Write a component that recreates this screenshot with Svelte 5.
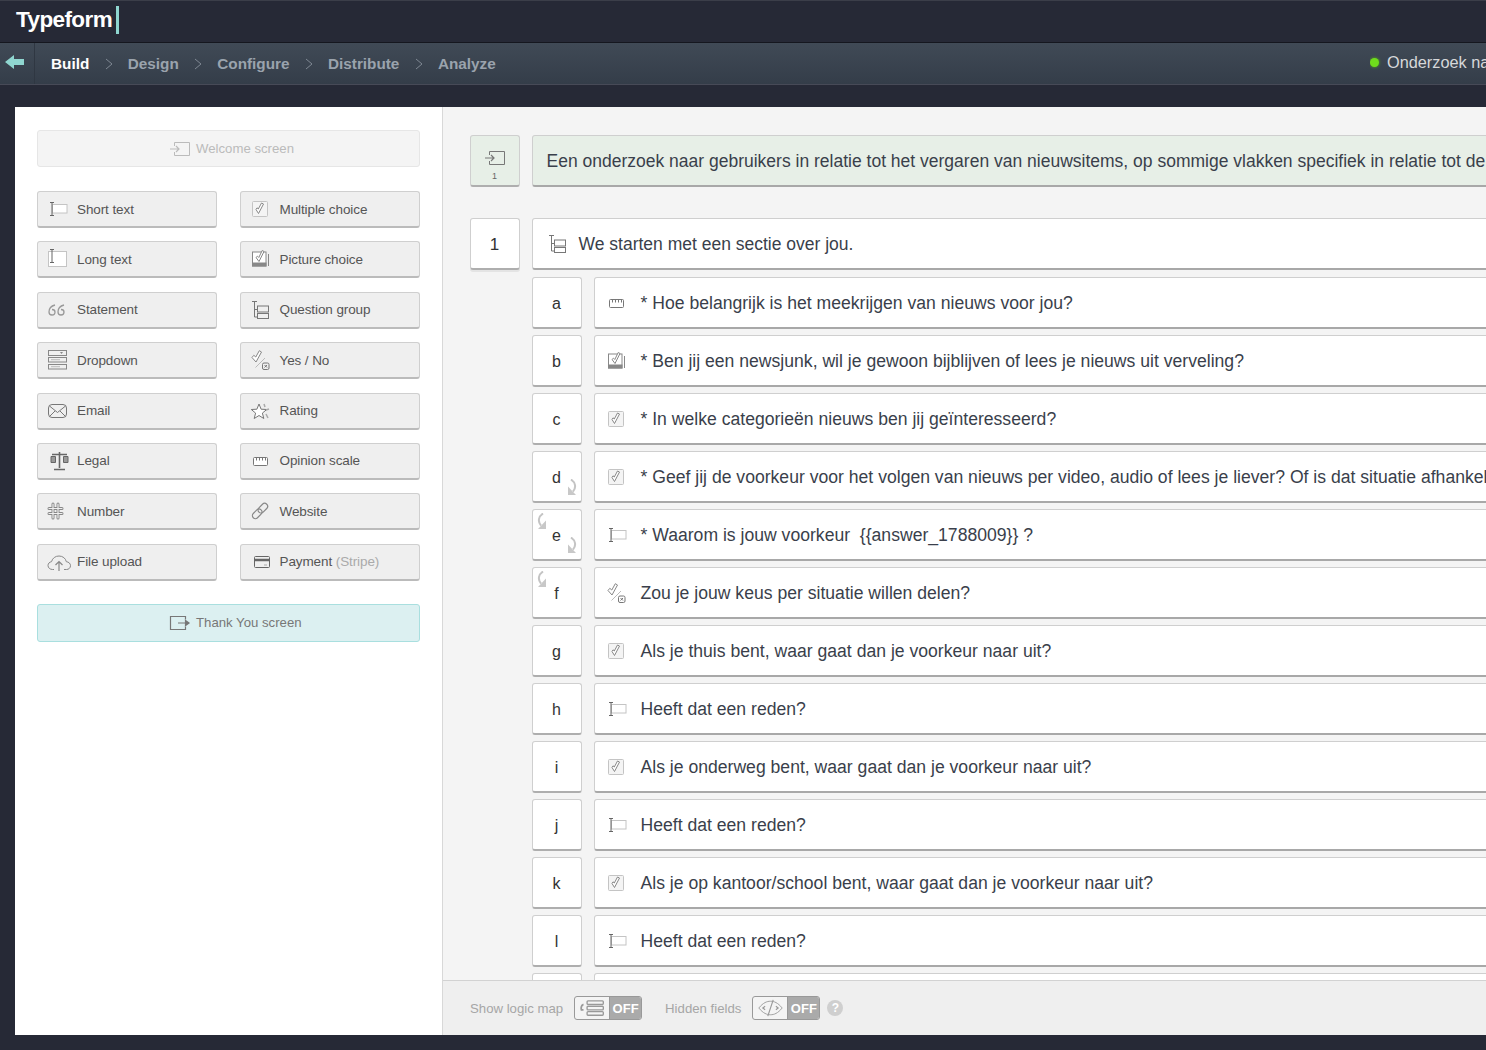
<script>
	const leftBlocks = [
		['short', 'Short text'], ['long', 'Long text'], ['quote', 'Statement'], ['dropdown', 'Dropdown'],
		['email', 'Email'], ['legal', 'Legal'], ['number', 'Number'], ['upload', 'File upload']
	];
	const rightBlocks = [
		['check', 'Multiple choice'], ['picture', 'Picture choice'], ['group', 'Question group'], ['yesno', 'Yes / No'],
		['star', 'Rating'], ['scale', 'Opinion scale'], ['link', 'Website'], ['card', 'Payment']
	];
	const blocks = leftBlocks.flatMap((b, i) => [b, rightBlocks[i]]);
	const steps = ['Design', 'Configure', 'Distribute', 'Analyze'];

	const questions = [
		{ id: 'a', icon: 'scale', text: '* Hoe belangrijk is het meekrijgen van nieuws voor jou?' },
		{ id: 'b', icon: 'picture', text: '* Ben jij een newsjunk, wil je gewoon bijblijven of lees je nieuws uit verveling?' },
		{ id: 'c', icon: 'check', text: '* In welke categorieën nieuws ben jij geïnteresseerd?' },
		{ id: 'd', icon: 'check', out: true, text: '* Geef jij de voorkeur voor het volgen van nieuws per video, audio of lees je liever? Of is dat situatie afhankelijk?' },
		{ id: 'e', icon: 'short', into: true, out: true, text: '* Waarom is jouw voorkeur  {{answer_1788009}} ?' },
		{ id: 'f', icon: 'yesno', into: true, text: 'Zou je jouw keus per situatie willen delen?' },
		{ id: 'g', icon: 'check', text: 'Als je thuis bent, waar gaat dan je voorkeur naar uit?' },
		{ id: 'h', icon: 'short', text: 'Heeft dat een reden?' },
		{ id: 'i', icon: 'check', text: 'Als je onderweg bent, waar gaat dan je voorkeur naar uit?' },
		{ id: 'j', icon: 'short', text: 'Heeft dat een reden?' },
		{ id: 'k', icon: 'check', text: 'Als je op kantoor/school bent, waar gaat dan je voorkeur naar uit?' },
		{ id: 'l', icon: 'short', text: 'Heeft dat een reden?' },
		{ id: '', icon: '', text: '' }
	];
</script>

{#snippet icon(name)}
	<svg class="icon" viewBox="0 0 24 20" width="24" height="20" fill="none" stroke="currentColor" stroke-width="1">
		{#if name === 'short'}
			<rect x="5.500" y="5.500" width="14.500" height="8.500" fill="#fff" stroke="#c4c4c4" />
			<path d="M3 3.500h4M3 16.500h4M5 3.500v13" stroke="#666" />
		{:else if name === 'long'}
			<rect x="1.500" y="2.500" width="18" height="15" fill="#fff" stroke="#c4c4c4" />
			<path d="M3 0.500h4M3 13.500h4M5 0.500v13" stroke="#666" />
		{:else if name === 'quote'}
			<path d="M8 5C4 6 2 9 2 12c0 2 1 3 3 3s3-1 3-3-1-2.500-3-2.500M17 5c-4 1-6 4-6 7 0 2 1 3 3 3s3-1 3-3-1-2.500-3-2.500" stroke="#999" stroke-width="1.300" />
		{:else if name === 'dropdown'}
			<rect x="1.500" y="0.500" width="18" height="5" stroke="#888" />
			<rect x="1.500" y="7.500" width="18" height="4.500" stroke="#888" />
			<rect x="1.500" y="14.500" width="18" height="4.500" stroke="#888" />
			<path d="M13 2.200h3l-1.500 1.500z" fill="#666" stroke="none" />
			<path d="M4 9.700h9M4 16.700h9" stroke="#bbb" />
		{:else if name === 'email'}
			<rect x="1.500" y="3.500" width="18" height="13" rx="3.500" stroke="#777" />
			<path d="M2.500 5l8 6.500L18.500 5M2.500 15.500l5.500-5.500M18.500 15.500l-5.500-5.500" stroke="#777" />
		{:else if name === 'legal'}
			<path d="M12.500 1v16M7 18.500h11M5 3.500h15" stroke="#666" stroke-width="1.600" />
			<path d="M4 5.500h4.500v6H4zM16.500 5.500H21v6h-4.500z" fill="#999" stroke="#666" />
		{:else if name === 'number'}
			<path d="M6 3v14M11 3v14M2 7.500h13M2 12.500h13" stroke="#888" stroke-width="3" stroke-linecap="round" />
			<path d="M6 3v14M11 3v14M2 7.500h13M2 12.500h13" stroke="#efefef" stroke-width="1.200" stroke-linecap="round" />
		{:else if name === 'upload'}
			<path d="M7 17.500H5.500C3 17.500 1 15.800 1 13.500c0-2 1.500-3.500 3.500-3.800C5.500 6 8.500 4 12 4c3.800 0 6.800 2.500 7.300 5.700 2.400.2 4.200 1.800 4.200 4 0 2.200-1.800 3.800-4 3.800H17" stroke="#888" />
			<path d="M12 19V10M8.500 13l3.500-3.500 3.500 3.500" stroke="#888" stroke-width="1.200" />
		{:else if name === 'check'}
			<rect x="2.500" y="2.500" width="15" height="15" rx="1" fill="#f4f4f4" stroke="#c4c4c4" />
			<path d="M6 10.500l2.500 4 5-9.500-2-1-3.200 6-1.300-1.200z" fill="#fff" stroke="#888" />
		{:else if name === 'picture'}
			<rect x="2.500" y="3" width="13.500" height="14" fill="#fff" stroke="#888" />
			<path d="M2 13.500h14.500V17.500H2z" fill="#888" stroke="none" />
			<path d="M6 8.500l3 4 5-10-1.800-1-3.400 7-1.300-1.300zM18.500 5v12" fill="#fff" stroke="#888" />
		{:else if name === 'group'}
			<path d="M2 1.500h5M4.500 1.500v15.500h3M4.500 9.500h3" stroke="#777" />
			<rect x="7.500" y="6" width="11" height="6" stroke="#777" />
			<rect x="7.500" y="13.500" width="11" height="5" stroke="#777" />
		{:else if name === 'yesno'}
			<path d="M2 7.500l4 4.500 5.500-10-2.200-1.300-3.500 6.300-2-1.700z" fill="#fff" stroke="#888" />
			<path d="M5.500 17.500L15 8" stroke="#bbb" />
			<rect x="12.500" y="13" width="6.500" height="6.500" rx="1.500" stroke="#777" />
			<path d="M14.500 15l2.500 2.500M17 15l-2.500 2.500" stroke="#777" />
		{:else if name === 'star'}
			<path d="M9 3l2.100 5.200 5.600.3-4.300 3.600 1.400 5.400L9 14.500l-4.800 3 1.400-5.400-4.300-3.600 5.600-.3z" fill="#fff" stroke="#777" />
			<path d="M14 3l1 3M19 8l-3 1M16 13l2 4" stroke="#aaa" stroke-width="1.500" />
		{:else if name === 'scale'}
			<rect x="3.500" y="6.500" width="14" height="8" rx="1" fill="#fff" stroke="#777" />
			<path d="M6.500 6.500v3M9.500 6.500v3M12.500 6.500v3M15.500 6.500v3" stroke="#777" />
		{:else if name === 'link'}
			<g transform="rotate(-45 10 10)" stroke="#888" stroke-width="1.200">
				<rect x="0.500" y="7" width="11" height="6" rx="3" />
				<rect x="8.500" y="7" width="11" height="6" rx="3" />
			</g>
		{:else if name === 'card'}
			<rect x="4.500" y="4.500" width="15" height="11" rx="1" stroke="#666" />
			<path d="M4.500 8h15" stroke="#666" stroke-width="2.500" />
			<path d="M14 13h3" stroke="#aaa" />
		{/if}
	</svg>
{/snippet}

{#snippet entry()}
	<svg viewBox="0 0 22 16" width="22" height="16" fill="none" stroke="currentColor">
		<path d="M5.500 5V1.500h15v13h-15V11" />
		<path d="M1 8h9M7 5l3 3-3 3" stroke-width="1.200" />
	</svg>
{/snippet}

{#snippet jump(cls)}
	<svg class="jump {cls}" viewBox="0 0 10 17" width="10" height="17" fill="none">
		<path d="M4 0.500C8.500 3.500 9.500 8.500 6 12.500" stroke="#c4c4c4" stroke-width="2" />
		<path d="M1 7.500L9 16H1z" fill="#c8c8c8" />
	</svg>
{/snippet}

{#snippet chevron()}
	<svg class="chevron" viewBox="0 0 8 12" width="8" height="12" fill="none" stroke="#7f8893">
		<path d="M1 1l6 5-6 5" />
	</svg>
{/snippet}

<div class="app">
	<header class="topbar">
		<span class="logo">Typeform</span><span class="caret"></span>
	</header>

	<nav class="navbar">
		<button class="back" aria-label="Back">
			<svg viewBox="0 0 20 16" width="20" height="16"><path d="M0 8l9-7v4h10v6H9v4z" fill="#8fd6d0" /></svg>
		</button>
		<ul class="steps">
			<li class="active">Build</li>
			{#each steps as step}
				<li class="sep">{@render chevron()}</li>
				<li>{step}</li>
			{/each}
		</ul>
		<div class="form-name"><span class="dot"></span>Onderzoek naar nieuwsitems</div>
	</nav>

	<main class="workspace">
		<aside class="sidebar">
			<div class="wide welcome"><span class="wide-icon">{@render entry()}</span>Welcome screen</div>
			<div class="block-grid">
				{#each blocks as [name, label]}
					<div class="block">
						<span class="block-icon">{@render icon(name)}</span>
						<span>{label}{#if name === 'card'}&nbsp;<em>(Stripe)</em>{/if}</span>
					</div>
				{/each}
			</div>
			<div class="wide thanks">
				<svg class="wide-icon" viewBox="0 0 22 16" width="22" height="16" fill="none" stroke="#777">
					<path d="M16.500 4.500V1.500H1.500v13h15v-3" stroke-width="1.200" />
					<path d="M9 8h10M16.500 5.500L20 8l-3.500 2.500z" fill="#777" stroke-width="1.200" />
				</svg>
				Thank You screen
			</div>
		</aside>

		<section class="builder">
			<div class="scroll">
				<div class="row intro">
					<div class="tile">
						<span class="intro-icon">{@render entry()}</span>
						<small>1</small>
					</div>
					<div class="box">Een onderzoek naar gebruikers in relatie tot het vergaren van nieuwsitems, op sommige vlakken specifiek in relatie tot de leeftijd</div>
				</div>

				<div class="row group-row">
					<div class="tile">1</div>
					<div class="box">
						<span class="q-icon">{@render icon('group')}</span>
						<span class="q-text">We starten met een sectie over jou.</span>
					</div>
				</div>

				<div class="questions">
					{#each questions as q}
						<div class="row question">
							<div class="tile">
								{#if q.into}{@render jump('in')}{/if}
								{q.id}
								{#if q.out}{@render jump('out')}{/if}
							</div>
							<div class="box">
								<span class="q-icon">{@render icon(q.icon)}</span>
								<span class="q-text">{q.text}</span>
							</div>
						</div>
					{/each}
				</div>
			</div>

			<footer class="bottom">
				<span>Show logic map</span>
				<div class="toggle">
					<span class="toggle-icon">
						<svg viewBox="0 0 30 20" width="30" height="20" fill="none" stroke="#999" stroke-width="1.500">
							<path d="M5 6C2 7 2 11 3 13M3 12h2" stroke-width="2" />
							<rect x="9" y="2" width="18" height="4" rx="1" />
							<rect x="9" y="8" width="18" height="4" rx="1" />
							<rect x="9" y="14" width="18" height="4" rx="1" />
						</svg>
					</span>
					<span class="toggle-off">OFF</span>
				</div>
				<span class="hidden-label">Hidden fields</span>
				<div class="toggle">
					<span class="toggle-icon">
						<svg viewBox="0 0 30 20" width="30" height="20" fill="none" stroke="#999">
							<path d="M2 10C7 4 11 2.500 15 2.500S23 4 28 10c-5 6-9 7.500-13 7.500S7 16 2 10z" />
							<path d="M9 8l-2.500 2L9 12M21 8l2.500 2-2.500 2M18 1l-6 18" stroke-width="1.300" />
						</svg>
					</span>
					<span class="toggle-off">OFF</span>
				</div>
				<span class="help">?</span>
			</footer>
		</section>
	</main>
</div>

<style>
	:global(body) {
		margin: 0;
		overflow: hidden;
		background: #262936;
	}

	.app {
		width: 1486px;
		height: 1050px;
		display: flex;
		flex-direction: column;
		overflow: hidden;
		font-family: 'Liberation Sans', Arial, sans-serif;
		background: #262936;
	}

	.topbar {
		height: 43px;
		flex-shrink: 0;
		display: flex;
		align-items: center;
		padding: 0 0 3px 16px;
		border-top: 1px solid #3b3e49;
		box-sizing: border-box;
		border-bottom: 1px solid #15171f;
	}

	.logo {
		font-size: 22.500px;
		font-weight: 700;
		letter-spacing: -0.6px;
		color: #fff;
	}

	.caret {
		width: 3px;
		height: 28px;
		margin-left: 4px;
		background: #8fd6d0;
	}

	.navbar {
		height: 42px;
		flex-shrink: 0;
		box-sizing: border-box;
		display: flex;
		align-items: center;
		background: linear-gradient(#404a56, #343d49);
		border-bottom: 1px solid #474a57;
	}

	.back {
		width: 35px;
		height: 100%;
		padding: 0 0 4px 5px;
		background: none;
		border: 0;
		border-right: 1px solid #2f3742;
		display: flex;
		align-items: center;
	}

	.steps {
		flex: 1;
		display: flex;
		align-items: center;
		margin: 0 0 0 16px;
		padding: 0;
		list-style: none;
		font-size: 15.300px;
		font-weight: 700;
		color: #9aa3ad;
	}

	.steps .active {
		color: #fff;
	}

	.steps .sep {
		width: 38.500px;
		display: flex;
		justify-content: center;
	}

	.form-name {
		width: 116px;
		flex-shrink: 0;
		padding-bottom: 2px;
		white-space: nowrap;
		overflow: hidden;
		font-size: 16.300px;
		color: #d6d8da;
		display: flex;
		align-items: center;
		gap: 8px;
	}

	.dot {
		width: 9px;
		height: 9px;
		flex-shrink: 0;
		border-radius: 50%;
		background: #6fdc1c;
		box-shadow: 0 0 3px #58b812;
	}

	.workspace {
		flex: 1;
		min-height: 0;
		display: flex;
		margin: 22px 0 15px 15px;
	}

	.sidebar {
		width: 427px;
		flex-shrink: 0;
		box-sizing: border-box;
		padding: 23px 22px 0;
		background: #fff;
	}

	.wide {
		height: 37px;
		box-sizing: border-box;
		display: flex;
		align-items: center;
		gap: 5px;
		border-radius: 3px;
		font-size: 13.200px;
		padding-left: 131px;
	}

	.wide-icon {
		display: flex;
	}

	.welcome {
		background: #f4f4f4;
		border: 1px solid #e6e6e6;
		color: #bbb;
	}

	.thanks {
		height: 38px;
		margin-top: 23px;
		background: #dcf0f1;
		border: 1px solid #a9dfdf;
		color: #777;
	}

	.block-grid {
		margin-top: 24px;
		display: grid;
		grid-template-columns: 180px 180.500px;
		grid-auto-rows: 37px;
		gap: 13.400px 22.500px;
	}

	.block {
		box-sizing: border-box;
		display: flex;
		align-items: center;
		background: #efefef;
		border: 1px solid #cfcfcf;
		border-bottom: 2px solid #bbb;
		border-radius: 3px;
		font-size: 13.500px;
		letter-spacing: -0.1px;
		color: #555;
	}

	.block-icon {
		width: 24px;
		margin: 0 6px 0 9px;
		display: flex;
	}

	.block em {
		font-style: normal;
		color: #aaa;
	}

	.builder {
		flex: 1;
		min-width: 0;
		display: flex;
		flex-direction: column;
		background: #f4f4f4;
		border-left: 1px solid #d8d8d8;
	}

	.scroll {
		flex: 1;
		min-height: 0;
		overflow: hidden;
		padding: 28px 0 0 26.500px;
	}

	.row {
		display: flex;
	}

	.tile {
		position: relative;
		width: 50px;
		height: 52px;
		flex-shrink: 0;
		box-sizing: border-box;
		padding-top: 3px;
		display: flex;
		flex-direction: column;
		align-items: center;
		justify-content: center;
		background: #fff;
		border: 1px solid #cfcfcf;
		border-bottom: 2px solid #aeaeae;
		border-radius: 3px;
		font-size: 16px;
		color: #333;
	}

	.box {
		width: 1200px;
		height: 52px;
		flex-shrink: 0;
		box-sizing: border-box;
		margin-left: 12px;
		display: flex;
		align-items: center;
		white-space: nowrap;
		overflow: hidden;
		padding: 1px 0 0 14px;
		background: #fff;
		border: 1px solid #cfcfcf;
		border-bottom: 2px solid #a8a8a8;
		border-radius: 3px;
		font-size: 17.500px;
		color: #3a3f4b;
	}

	.q-text {
		white-space: pre;
	}

	.intro .tile,
	.intro .box {
		background: #e7efe7;
	}

	.intro .tile {
		color: #666;
		padding-top: 1px;
	}

	.intro small {
		font-size: 9px;
		margin-top: 5px;
	}

	.intro-icon {
		display: flex;
		color: #777;
		margin-top: 9px;
	}

	.group-row {
		margin-top: 31px;
	}

	.group-row .tile {
		box-shadow: 0 2px 0 #e4e4e4;
		font-size: 17px;
	}

	.q-icon {
		display: flex;
		margin-right: 8px;
		width: 24px;
		flex-shrink: 0;
	}

	.questions {
		display: flex;
		flex-direction: column;
		gap: 6px;
		margin: 7px 0 0 62px;
	}

	.question .box {
		padding-left: 11px;
		font-size: 17.600px;
	}

	.question .q-icon {
		margin-right: 11px;
	}

	.jump {
		position: absolute;
	}

	.jump.in {
		top: 3px;
		left: 4px;
		transform: scaleX(-1);
	}

	.jump.out {
		right: 4px;
		bottom: 5px;
	}

	.bottom {
		height: 55px;
		flex-shrink: 0;
		box-sizing: border-box;
		position: relative;
		display: flex;
		align-items: center;
		padding-left: 27px;
		background: #efefef;
		border-top: 1px solid #d2d2d2;
		font-size: 13.200px;
		color: #a6a6a6;
	}

	.toggle {
		width: 68px;
		height: 24px;
		margin-left: 11px;
		display: flex;
		box-sizing: border-box;
		overflow: hidden;
		border: 1px solid #999;
		border-radius: 3px;
		background: #f4f4f4;
	}

	.toggle-icon {
		width: 34px;
		display: flex;
		align-items: center;
		justify-content: center;
		border-right: 1px solid #999;
	}

	.toggle-icon svg {
		width: 27px;
		height: 18px;
	}

	.toggle-off {
		flex: 1;
		display: flex;
		align-items: center;
		justify-content: center;
		background: #aaa;
		color: #fff;
		font-size: 13px;
		font-weight: 700;
	}

	.hidden-label {
		margin-left: 23px;
	}

	.help {
		width: 16px;
		height: 16px;
		margin-left: 7px;
		border-radius: 50%;
		background: #cfcfcf;
		color: #fff;
		font-size: 12px;
		font-weight: 700;
		text-align: center;
		line-height: 16px;
	}
</style>
